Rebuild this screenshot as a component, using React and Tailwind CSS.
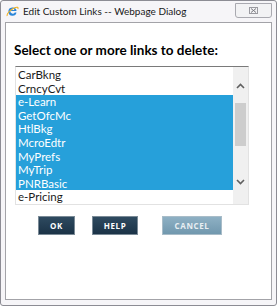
import React from 'react';

const links = [
  { name: 'CarBkng', sel: false },
  { name: 'CrncyCvt', sel: false },
  { name: 'e-Learn', sel: true },
  { name: 'GetOfcMc', sel: true },
  { name: 'HtlBkg', sel: true },
  { name: 'McroEdtr', sel: true },
  { name: 'MyPrefs', sel: true },
  { name: 'MyTrip', sel: true },
  { name: 'PNRBasic', sel: true },
  { name: 'e-Pricing', sel: false },
];

function IeIcon() {
  return (
    <svg width="13" height="13" viewBox="0 0 16 16">
      <path d="M3 8.5a5 5 0 0 1 10-1H5.2a3 3 0 0 0 5.6 1.6h2.1A5 5 0 0 1 3 8.5z" fill="#2b86d8" />
      <path d="M6 6.2h4.4a2.3 2.3 0 0 0-4.4 0z" fill="#fff" />
      <path d="M1.5 13.5c-1-2 3-7 8-9.5s6-1 5 1" fill="none" stroke="#f2b01e" strokeWidth="1.3" />
    </svg>
  );
}

function Chevron({ up }) {
  return (
    <svg width="9" height="6" viewBox="0 0 9 6">
      <path d={up ? 'M1 5l3.5-3.5L8 5' : 'M1 1l3.5 3.5L8 1'} fill="none" stroke="#606060" strokeWidth="1.6" />
    </svg>
  );
}

export default function App() {
  const ui = { fontFamily: 'Lato, "Open Sans", sans-serif' };
  const btnFont = { fontFamily: '"Open Sans", sans-serif' };
  return (
    <div className="w-[277px] h-[306px] bg-[#f6f5f8] border border-[#8c8c94] rounded-[3px] flex flex-col" style={ui}>
      <div className="h-[21px] flex items-center pl-[5px] pr-[4px] shrink-0">
        <IeIcon />
        <span className="ml-[4px] text-[10px] text-[#1a1a1a]">Edit Custom Links -- Webpage Dialog</span>
        <div className="ml-auto w-[37px] h-[15px] -mt-[3px] border border-[#a9a9b0] rounded-b-[3px] bg-[#f2f2f4] flex items-center justify-center">
          <svg width="9" height="7" viewBox="0 0 9 7">
            <rect x="0.5" y="0.5" width="8" height="6" fill="none" stroke="#9a9aa0" />
            <path d="M2 1.5l5 4M7 1.5l-5 4" stroke="#7a7a80" strokeWidth="1" />
          </svg>
        </div>
      </div>
      <div className="flex-1 mx-[4px] mb-[5px] bg-white border border-[#a3a3a8] flex flex-col">
        <div className="pl-[8px] pt-[19px] text-[13.5px] font-bold text-black leading-[16px]">
          Select one or more links to delete:
        </div>
        <div className="ml-[9px] mt-[8px] w-[234px] h-[139px] border border-[#e2e2e2] border-t-[#7a7a7a] flex">
          <div className="flex-1 pt-[1px]">
            {links.map((l) => (
              <div
                key={l.name}
                className={
                  l.sel
                    ? 'h-[13.6px] leading-[13.6px] pl-[2px] text-[11.5px] bg-[#26a0da] text-white'
                    : 'h-[13.6px] leading-[13.6px] pl-[2px] text-[11.5px] text-[#1a1a1a]'
                }
              >
                {l.name}
              </div>
            ))}
          </div>
          <div className="w-[15px] bg-[#f0f0f0] flex flex-col items-center">
            <div className="mt-[16px] h-[6px]"><Chevron up /></div>
            <div className="mt-[14px] w-[11px] h-[43px] bg-[#cdcdcd]" />
            <div className="mt-[33px] h-[6px]"><Chevron /></div>
          </div>
        </div>
        <div className="flex mt-[11px] pl-[32px] text-[8px] font-bold tracking-[0.6px] text-white" style={btnFont}>
          <div className="w-[37px] h-[19px] bg-gradient-to-b from-[#2e4a60] to-[#1b3347] border border-[#7a8a96] flex items-center justify-center">OK</div>
          <div className="ml-[17px] w-[46px] h-[19px] bg-gradient-to-b from-[#2e4a60] to-[#1b3347] border border-[#7a8a96] flex items-center justify-center">HELP</div>
          <div className="ml-[24px] w-[60px] h-[19px] bg-gradient-to-b from-[#8eb0c4] to-[#7198ae] border border-[#a8bcc8] flex items-center justify-center text-[#e8eef2]">CANCEL</div>
        </div>
      </div>
    </div>
  );
}
